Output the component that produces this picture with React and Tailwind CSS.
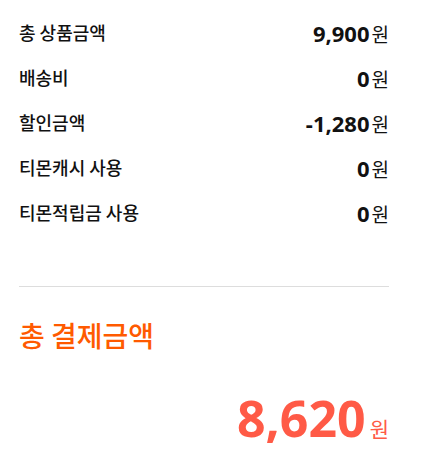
const rows = [
  { label: '총 상품금액', value: '9,900' },
  { label: '배송비', value: '0' },
  { label: '할인금액', value: '-1,280' },
  { label: '티몬캐시 사용', value: '0' },
  { label: '티몬적립금 사용', value: '0' },
];

export default function App() {
  return (
    <div className="w-[423px] h-[459px] bg-white pl-[19px] pt-[10px] text-[#111] font-['Noto_Sans','Noto_Sans_CJK_KR',sans-serif]">
      <div className="w-[370px]">
        <ul>
          {rows.map((r) => (
            <li key={r.label} className="flex h-[45px] items-center justify-between">
              <span className="text-[18px] font-medium font-['Noto_Sans_CJK_KR',sans-serif]">{r.label}</span>
              <span className="flex items-baseline">
                <strong className="text-[22px] font-bold leading-none">{r.value}</strong>
                <span className="ml-[2px] text-[19px] leading-none font-['Noto_Sans_CJK_KR',sans-serif]">원</span>
              </span>
            </li>
          ))}
        </ul>
        <div className="mt-[51px] h-px bg-[#dddddd]" />
        <h2 className="mt-[34px] text-[28px] leading-none font-medium text-[#ff5a00] font-['Noto_Sans_CJK_KR',sans-serif]">
          총 결제금액
        </h2>
        <div className="mt-[44px] flex items-baseline justify-end text-[#ff5a46]">
          <strong className="text-[50px] font-bold leading-none">8,620</strong>
          <span className="ml-[4px] text-[21px] leading-none font-['Noto_Sans_CJK_KR',sans-serif]">원</span>
        </div>
      </div>
    </div>
  );
}
